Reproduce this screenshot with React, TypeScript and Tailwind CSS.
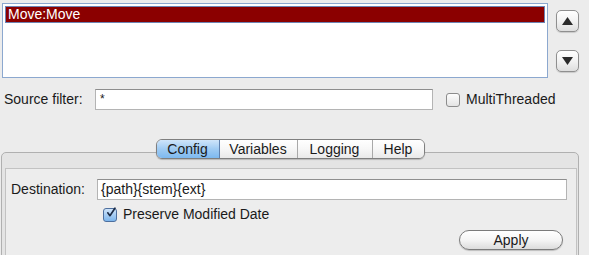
import { FC } from 'react';

const font = { fontFamily: '"Liberation Sans", Arial, sans-serif' };

const ArrowButton: FC<{ up?: boolean }> = ({ up }) => (
  <div className="w-[23px] h-[22px] rounded-[5px] border border-[#8f8f8f] bg-gradient-to-b from-[#ffffff] via-[#f2f2f2] to-[#dedede] flex items-center justify-center shadow-[0_1px_1px_rgba(0,0,0,0.15)]">
    <svg width="11" height="8" viewBox="0 0 11 8">
      {up ? (
        <polygon points="5.5,0 11,8 0,8" fill="#2b2b2b" />
      ) : (
        <polygon points="0,0 11,0 5.5,8" fill="#2b2b2b" />
      )}
    </svg>
  </div>
);

const tabs = ['Config', 'Variables', 'Logging', 'Help'];
const tabWidths = ['w-[63px]', 'w-[78px]', 'w-[75px]', 'w-[51px]'];

const App: FC = () => {
  return (
    <div
      className="w-[589px] h-[255px] bg-[#ececec] text-[14px] text-[#1a1a1a] overflow-hidden"
      style={font}
    >
      {/* list + move buttons */}
      <div className="flex pt-[3px] pl-[2px]">
        <div className="w-[546px] h-[75px] border border-[#8ca8cf] bg-white p-[2px]">
          <div className="h-[17px] bg-[#8b0000] border border-[#6d83b3] text-white leading-[15px] pl-[2px]">
            Move:Move
          </div>
        </div>
        <div className="ml-[8px] mt-[7px] flex flex-col gap-[18px]">
          <ArrowButton up />
          <ArrowButton />
        </div>
      </div>

      {/* source filter */}
      <div className="flex items-center mt-[11px] h-[21px]">
        <span className="ml-[4px] w-[91px]">Source filter:</span>
        <div className="w-[338px] h-[21px] bg-white border border-[#b4b4b4] border-t-[#8e8e8e] leading-[19px] pl-[4px] text-[12px]">
          *
        </div>
        <div className="ml-[13px] w-[14px] h-[14px] rounded-[3px] border border-[#8c8c8c] bg-gradient-to-b from-[#fdfdfd] to-[#e4e4e4]" />
        <span className="ml-[6px]">MultiThreaded</span>
      </div>

      {/* tabs */}
      <div className="relative z-10 flex justify-center mt-[29px] pl-[1px] pr-[10px]">
        <div className="flex h-[20px] rounded-[6px] border border-[#7f7f7f] overflow-hidden shadow-[0_1px_1px_rgba(0,0,0,0.2)]">
          {tabs.map((t, i) => (
            <div
              key={t}
              className={
                i === 0
                  ? `${tabWidths[i]} flex items-center justify-center bg-gradient-to-b from-[#cfe5fa] via-[#9fcbf3] to-[#7db9f0] border-r border-[#5f80ad] leading-none`
                  : `${tabWidths[i]} flex items-center justify-center bg-gradient-to-b from-[#ffffff] via-[#f7f7f7] to-[#e9e9e9] ${i < tabs.length - 1 ? 'border-r border-[#a9a9a9]' : ''} leading-none`
              }
            >
              {t}
            </div>
          ))}
        </div>
      </div>

      {/* panel */}
      <div className="-mt-[7px] ml-[1px] w-[578px] h-[110px] rounded-t-[5px] border border-[#b0b0b0] bg-[#e4e4e4] pt-[15px] pl-[3px] pr-[1px]">
        <div className="h-full border-t border-l border-r border-[#c2c2c2] bg-[#ededed] pt-[10px] pl-[5px]">
          <div className="flex items-center">
            <span className="w-[86px]">Destination:</span>
            <div className="w-[470px] h-[21px] bg-white border border-[#b4b4b4] border-t-[#8e8e8e] leading-[19px] pl-[3px]">
              {'{path}{stem}{ext}'}
            </div>
          </div>
          <div className="flex items-center mt-[7px] ml-[92px] h-[15px]">
            <div className="w-[14px] h-[14px] rounded-[3px] border border-[#4d6f9e] bg-gradient-to-b from-[#cfe4f9] to-[#7cb5ec] flex items-center justify-center">
              <svg width="14" height="15" viewBox="0 0 14 15" className="-mt-[4px] ml-[2px]">
                <path
                  d="M2.5 8 L5.5 12 L12.5 1.5"
                  fill="none"
                  stroke="#1b2a44"
                  strokeWidth="2.3"
                  strokeLinecap="round"
                  strokeLinejoin="round"
                />
              </svg>
            </div>
            <span className="ml-[6px]">Preserve Modified Date</span>
          </div>
          <div className="flex justify-end mt-[8px] pr-[13px]">
            <div className="w-[104px] h-[20px] rounded-full border border-[#7b7b7b] bg-gradient-to-b from-[#ffffff] via-[#f5f5f5] to-[#dcdcdc] flex items-center justify-center shadow-[0_1px_1px_rgba(0,0,0,0.2)]">
              Apply
            </div>
          </div>
        </div>
      </div>
    </div>
  );
};

export default App;
